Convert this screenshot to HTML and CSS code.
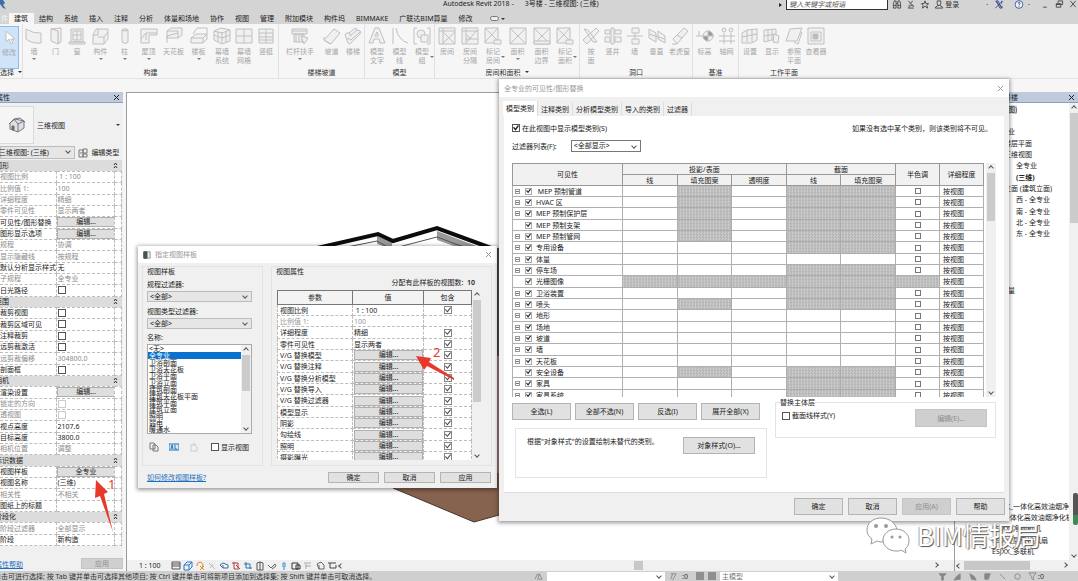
FILE: index.html
```html
<!DOCTYPE html>
<html lang="zh-CN">
<head>
<meta charset="utf-8">
<title>Autodesk Revit 2018 - 三维视图</title>
<link rel="stylesheet" href="styles.css">
</head>
<body>
<header class="titlebar">
  <svg class="logo" viewBox="0 0 6 10"><path d="M0 0h3l2 3-2 2 3 4-3-1-3-4z" fill="#3c6ea8"/></svg>
  <div class="doc-title"><span>Autodesk Revit 2018 -</span><span>3号楼 - 三维视图: (三维)</span></div>
  <div class="title-tools">
    <span class="tri-right"></span>
    <input class="search" type="text" placeholder="键入关键字或短语" aria-label="搜索">
    <svg viewBox="0 0 10 10"><path d="M1 9V4l1-3h2v8zM9 9V4L8 1H6v8zM4 4h2M1 6h3M6 6h3"/></svg>
    <svg viewBox="0 0 10 10"><path d="M2 1l6 6-3-1-3 3h6M7 1L4 4M2 7l2-2"/></svg>
    <svg viewBox="0 0 10 10"><path d="M5 1l1 3h3L7 6l1 3-3-2-3 2 1-3-2-2h3z"/></svg>
    <svg viewBox="0 0 10 10"><path d="M3 1h4v3L6 6h-2L3 4zM4 6L1 8v1h8V8L6 6"/></svg>
    <a class="login" href="#">登录</a>
    <span class="dot">·</span>
    <svg class="navy" viewBox="0 0 10 10"><path d="M1 1l8 8M9 1L1 9M2 1h2l4 8H6zM8 1v3M8 7h1"/></svg>
    <svg class="help" viewBox="0 0 10 10"><circle cx="5" cy="5" r="4.300"/><path d="M4 4q0-2 1.500-1.500T5 6M5 7v1"/></svg>
    <span class="dot">·</span>
    <button class="win" aria-label="最小化"><svg viewBox="0 0 10 10"><path d="M3 8h4"/></svg></button>
    <button class="win" aria-label="还原"><svg viewBox="0 0 10 10"><path d="M4 3V1h5v4H7M2 4h5v4H2zM2 5h5"/></svg></button>
    <button class="win" aria-label="关闭"><svg viewBox="0 0 10 10"><path d="M2 1l6 7M8 1L2 8"/></svg></button>
  </div>
</header>
<nav class="tabs" id="tabs"></nav>
<section class="ribbon" id="ribbon"></section>
<main class="workspace">
  <aside class="props">
    <div class="dock-head"><span class="shift">属性</span><button class="x" aria-label="关闭"><svg viewBox="0 0 7 7"><path d="M1 1l5 5M6 1L1 6"/></svg></button></div>
    <div class="type-row">
      <span class="thumb"><svg viewBox="0 0 18 18"><path d="M2 7l5-4 9 2v7l-6 4-8-3z" fill="#dcdfe6"/><path d="M1 8l5-5 4 5v8M10 8l6-3M6 3l6-1 5 4"/><path d="M4 10h2v4H4z" fill="#555"/></svg></span>
      <span class="type-name">三维视图</span><span class="tri"></span>
    </div>
    <div class="inst-row">
      <span class="select grow"><select aria-label="实例"><option>三维视图: (三维)</option></select></span>
      <button class="edit-type"><svg viewBox="0 0 10 10"><path d="M1 2h4v7H1zM5 1h4v4H5zM5 6h4v3H5zM2 5h2"/></svg>编辑类型</button>
    </div>
    <table class="grid prop-grid" id="props"></table>
    <div class="props-foot"><a href="#">属性帮助</a><button class="btn off">应用</button></div>
  </aside>
  <section class="canvas">
    <div class="scene"><svg viewBox="0 0 829 468">
      <path d="M188 155l62-12 15 7 45-14 52 19v8l-52-18-44 12-16-7-48 11z" fill="#fff"/>
      <path d="M250 142l15 7v7l-15-5zM310 138l50 19h-22l-28-10z" fill="#9a9a9a"/>
      <path d="M186 156l65-15 15 7 44-13 54 20" fill="none" stroke="#0c0c0c" stroke-width="4"/>
      <path d="M200 158l50-10 14 8 46-12 32 12" fill="none" stroke="#555" stroke-width="1"/>
      <path d="M368 155h4v108h-4z" fill="#55594f"/><path d="M368 263h4v124h-4z" fill="#b58b94"/>
      <path d="M230 380l36 15 81 34 25-7v-42z" fill="#86634f"/>
      <path d="M266 395l81 34 25-7" fill="none" stroke="#4a342a"/>
    </svg></div>
    <div class="view-bar">
      <span class="scale">1 : 100</span>
      <span class="view-icons" id="viewIcons"></span>
      <span class="chev left"></span>
      <span class="hthumb"></span>
      <span class="chev right"></span>
      <span class="corner"></span>
    </div>
  </section>
  <aside class="browser">
    <div class="dock-head"><span class="proj">3号楼</span><button class="x" aria-label="关闭"><svg viewBox="0 0 7 7"><path d="M1 1l5 5M6 1L1 6"/></svg></button></div>
    <div class="browser-body">
      <ul class="tree">
        <li class="in3"><mark>图)</mark></li><li></li><li class="in3">业</li><li class="in2">楼层平面</li><li class="in2">三维视图</li>
        <li class="in4">全专业</li><li class="in4"><b>(三维)</b></li><li class="in2">立面 (建筑立面)</li>
        <li class="in4">西 - 全专业</li><li class="in4">南 - 全专业</li><li class="in4">北 - 全专业</li><li class="in4">东 - 全专业</li>
        <li></li><li></li><li></li><li></li><li class="in3">量</li>
      </ul>
      <ul class="tree tree-end">
        <li class="in1">ESJXX_一体化高效油烟净化</li><li class="in1">ES_一体化高效油烟净化机</li><li class="in1">ESJXX_净烟机机</li><li class="in1">ESJXX_厨房排风扇</li><li class="in1">ESJXX_多联机</li>
      </ul>
      <div class="vbar"><span class="chev up"></span><span class="vthumb"></span><span class="mark"></span><span class="chev down end"></span></div>
    </div>
    <div class="browser-h"><span class="chev left"></span><span class="bthumb"></span><span class="chev right"></span></div>
  </aside>
</main>
<footer class="status">
  <span class="hint">单击可进行选择; 按 Tab 键并单击可选择其他项目; 按 Ctrl 键并单击可将新项目添加到选择集; 按 Shift 键并单击可取消选择。</span>
  <svg viewBox="0 0 10 10"><path d="M1 8l3-6 2 2M4 8l2-6 3 6z"/></svg>
  <span class="select workset"><select aria-label="工作集"><option></option></select></span>
  <svg viewBox="0 0 10 10"><path d="M2 2h6L4 9M2 8l2-6"/></svg><span>:0</span>
  <span class="sq"></span><span class="sq"></span>
  <span class="select model"><select aria-label="设计选项"><option>主模型</option></select></span>
  <span class="status-icons"><svg viewBox="0 0 10 10"><path d="M1 2h8L6 5v4H4V5z"/></svg><svg viewBox="0 0 10 10"><path d="M1 9l3-4 4-3v6z"/></svg><svg viewBox="0 0 10 10"><path d="M2 2l5 3 2 4-5-1z"/></svg><svg viewBox="0 0 10 10"><path d="M2 2h6L6 8H2z"/></svg><svg class="line-icon" viewBox="0 0 10 10"><path d="M2 2l3 3M5 5l3 3"/></svg><svg class="line-icon" viewBox="0 0 10 10"><circle cx="5" cy="5" r="3"/></svg><svg class="line-icon" viewBox="0 0 10 10"><path d="M1 1h8L6 5v4L4 7V5z"/></svg><span>:0</span></span>
</footer>

<section class="dialog template" role="dialog" aria-label="指定视图样板">
  <div class="dlg-title"><svg viewBox="0 0 10 10"><path d="M1 1h8v8H1z" fill="#e8e8e8" stroke="#888"/><path d="M1 1h4v8H1z" fill="#3a5f52"/></svg><span>指定视图样板</span><button class="x" aria-label="关闭"><svg viewBox="0 0 7 7"><path d="M1 1l5 5M6 1L1 6"/></svg></button></div>
  <div class="tpl-body">
    <div class="tpl-left">
      <h3>视图样板</h3>
      <label for="f1">规程过滤器:</label>
      <span class="select"><select id="f1"><option>&lt;全部&gt;</option></select></span>
      <label for="f2">视图类型过滤器:</label>
      <span class="select"><select id="f2"><option>&lt;全部&gt;</option></select></span>
      <span class="names">名称:</span>
      <div class="list"><ul>
        <li>&lt;无&gt;</li><li class="sel">全专业</li><li>卫浴剖面</li><li>卫浴天花板</li><li>卫浴平面</li><li>卫浴立面</li><li>建筑剖面</li><li>建筑天花板平面</li><li>建筑平面</li><li>建筑立面</li><li>照明</li><li>弱电</li><li>暖通水</li>
      </ul><div class="vbar"><span class="chev up"></span><span class="vthumb"></span><span class="chev down end"></span></div></div>
      <div class="list-tools">
        <button aria-label="复制"><svg viewBox="0 0 10 10"><path d="M1 1h4l1 1v5H1zM4 3h3l2 2v4H4z"/></svg></button>
        <button aria-label="重命名"><svg class="blue" viewBox="0 0 10 10"><path d="M0 2h10v6H0zM2 7l1-4 1 4M6 3v4h2"/></svg></button>
        <button aria-label="删除"><svg class="faint" viewBox="0 0 10 10"><path d="M2 3h4l2 2v4H2zM4 1l3 2"/></svg></button>
        <label class="check"><input type="checkbox">显示视图</label>
      </div>
    </div>
    <div class="tpl-right">
      <h3>视图属性</h3>
      <p class="count">分配有此样板的视图数:&nbsp; <b>10</b></p>
      <div class="scroller"><div class="clip"><table class="grid tpl-grid"><thead><tr><th>参数</th><th>值</th><th>包含</th></tr></thead><tbody id="tplRows"></tbody></table></div>
      <div class="vbar"><span class="chev up"></span><span class="vthumb"></span><span class="chev down end"></span></div></div>
    </div>
  </div>
  <div class="tpl-foot"><a href="#">如何修改视图样板?</a><button class="btn">确定</button><button class="btn">取消</button><button class="btn">应用</button></div>
</section>

<section class="dialog vg" role="dialog" aria-label="可见性/图形替换">
  <div class="dlg-title"><span>全专业的可见性/图形替换</span><button class="x" aria-label="关闭"><svg viewBox="0 0 7 7"><path d="M1 1l5 5M6 1L1 6"/></svg></button></div>
  <div class="vg-tabs"><button class="on">模型类别</button><button>注释类别</button><button>分析模型类别</button><button>导入的类别</button><button>过滤器</button></div>
  <div class="vg-page">
    <div class="line"><label class="check"><input type="checkbox" checked>在此视图中显示模型类别(S)</label><span class="note">如果没有选中某个类别，则该类别将不可见。</span></div>
    <div class="line filter"><label for="f3">过滤器列表(F):</label><span class="select"><select id="f3"><option>&lt;全部显示&gt;</option></select></span></div>
    <div class="scroller"><div class="clip"><table class="vg-grid">
      <colgroup><col class="c-name"><col><col><col><col><col><col class="c-half"><col class="c-half"></colgroup>
      <thead><tr><th rowspan="2">可见性</th><th colspan="3">投影/表面</th><th colspan="2">截面</th><th rowspan="2">半色调</th><th rowspan="2">详细程度</th></tr>
      <tr><th>线</th><th>填充图案</th><th>透明度</th><th>线</th><th>填充图案</th></tr></thead>
      <tbody id="vgRows"></tbody></table></div>
      <div class="vbar"><span class="chev up"></span><span class="vthumb"></span><span class="chev down end"></span></div></div>
    <div class="vg-lower">
      <div class="vg-a">
        <div class="btn-row"><button class="btn">全选(L)</button><button class="btn">全部不选(N)</button><button class="btn">反选(I)</button><button class="btn">展开全部(X)</button></div>
        <div class="box"><span>根据"对象样式"的设置绘制未替代的类别。</span><button class="btn">对象样式(O)...</button></div>
      </div>
      <fieldset><legend>替换主体层</legend><label class="check"><input type="checkbox">截面线样式(Y)</label><button class="btn off">编辑(E)...</button></fieldset>
    </div>
  </div>
  <div class="vg-foot"><button class="btn">确定</button><button class="btn">取消</button><button class="btn off">应用(A)</button><button class="btn">帮助</button></div>
</section>

<div class="note-mark one"><svg viewBox="0 0 24 56"><path d="M2 1l12 12-4 2 9 38L6 17l-5 2z" fill="#e8382b"/></svg><span>1</span></div>
<div class="note-mark two"><svg viewBox="0 0 40 26"><path d="M1 1l15 2-2 4 25 16v2L12 11l-3 4z" fill="#e8382b"/></svg><span>2</span></div>
<div class="watermark">
  <svg viewBox="0 0 44 37"><path d="M15 1C7 1 1 6 1 13c0 4 2 7 5 9l-1 5 6-3c2 1 4 1 6 1 1-8 7-12 14-12C30 6 23 1 15 1z"/><path d="M30 12c-7 0-13 5-13 11s6 11 13 11c2 0 4 0 5-1l5 3-1-4c3-2 4-5 4-9 0-6-6-11-13-11z"/><g class="eyes"><circle cx="10" cy="9" r="2"/><circle cx="20" cy="9" r="2"/><circle cx="26" cy="20" r="1.500"/><circle cx="34" cy="20" r="1.500"/></g></svg>
  <span>BIM情报局</span>
</div>
<script src="app.js"></script>
</body>
</html>
```
FILE: styles.css
```css
*, *::before, *::after { box-sizing: border-box; }
html, body { height: 100%; }
body {
  margin: 0; overflow: hidden; position: relative;
  display: flex; flex-direction: column;
  font: 7px/9px "Noto Sans", "Noto Sans CJK SC", sans-serif;
  color: #222; background: #f6f6f6; white-space: nowrap;
}
button, input, select { font: inherit; color: inherit; margin: 0; padding: 0; border: 0; background: none; border-radius: 0; }
ul, h3, p { margin: 0; padding: 0; list-style: none; font-weight: 400; font-size: 7px; }
svg { fill: none; stroke: #444; flex: none; display: block; }
a { color: #1c6fc0; }
table { border-collapse: collapse; table-layout: fixed; }
td, th { padding: 0; font-weight: 400; overflow: hidden; }

.titlebar { height: 13px; flex: none; background: #d4d4d4; display: flex; justify-content: space-between; align-items: flex-start; position: relative; }
.logo { width: 6px; height: 10px; stroke: none; }
.doc-title { position: absolute; left: 443px; top: 0; display: flex; gap: 11px; line-height: 8px; }
.title-tools { display: flex; align-items: center; gap: 4px; height: 9px; color: #333; }
.title-tools svg { width: 10px; height: 9px; }
.title-tools .navy { stroke: #34448c; margin-left: 2px; }
.title-tools .help { stroke: #3d5a92; fill: #eef2fa; margin-left: 6px; }
.search { width: 102px; height: 10px; background: #fff; border: 1px solid #333; border-top: 0; padding-left: 2px; font-style: italic; line-height: 7px; }
.search::placeholder { color: #555; }
.tri-right { border: 2px solid transparent; border-left: 3px solid #222; border-right: 0; }
.login { color: #333; text-decoration: none; margin-left: -3px; }
.login + .dot { margin-left: 23px; }
.help + .dot + .win { margin-left: 6px; }

.tabs { height: 11px; flex: none; background: #d4d4d4; display: flex; padding-left: 1px; }
.tabs button { padding: 0 6px 0 5px; line-height: 11px; }
.tabs .file { color: #f4f4f4; padding: 0; width: 7px; }
.tabs .on { background: #f6f6f6; margin-left: 1px; }
.tabs .pill { width: 9px; height: 5px; margin: 3px 2px 0 11px; border: 1px solid #777; border-radius: 3px; background: #eee; }
.tabs .tri { margin-top: 5px; }
.tri { border: 2px solid transparent; border-top: 2px solid #333; border-bottom: 0; display: inline-block; }

.ribbon { height: 55px; flex: none; display: flex; border-bottom: 1px solid #e2e2e2; color: #a6a6a6; }
.panel { border-right: 1px solid #e0e0e0; display: flex; flex-direction: column; justify-content: space-between; padding-bottom: 1px; }
.panel:last-child { border: 0; }
.panel-tools { display: flex; height: 44px; }
.tool { display: flex; flex-direction: column; align-items: center; justify-content: flex-start; padding-top: 3px; color: inherit; text-align: center; position: relative; }
.tool svg { width: 18px; height: 18px; stroke: #c0c0c0; fill: #f0f0f0; margin-bottom: 2px; }
.tool svg .n { fill: none; }
.tool .tri { margin-top: 2px; border-top-color: #777; }
.tool .side { position: absolute; right: 0; top: 30px; }
.panel-name { text-align: center; color: #333; }
.panel-name .tri { margin: 0 0 2px 4px; }
.tool.pick { background: #cfe4f8; border: 1px solid #8fbbe4; border-left: 0; height: 43px; margin-top: 2px; padding-top: 1px; width: 19px; }
.tool.pick svg { fill: #fff; }

.workspace { flex: 1; display: flex; min-height: 0; padding-top: 13px; }
.dock-head { height: 11px; flex: none; background: #bfcbdc; border-bottom: 1px solid #8fa0b8; display: flex; justify-content: space-between; align-items: center; padding-right: 3px; }
.x svg { width: 7px; height: 7px; stroke: #222; }
.shift { margin-left: -4px; }
.props { width: 123px; flex: none; display: flex; flex-direction: column; background: #f0f0f0; overflow: hidden; }
.type-row { display: flex; align-items: center; height: 42px; padding: 2px 3px 0 0; gap: 3px; }
.thumb { width: 34px; height: 38px; border: 1px solid #dadada; border-left: 0; display: grid; place-items: center; background: #f5f5f5; }
.thumb svg { width: 18px; height: 18px; stroke: #777; }
.type-name { flex: 1; }
.inst-row { display: flex; height: 15px; align-items: center; gap: 3px; }
.edit-type { display: flex; align-items: center; gap: 3px; width: 45px; }
.edit-type svg { width: 10px; height: 10px; stroke: #777; }
.select { position: relative; display: flex; border: 1px solid #bcbcbc; background: #e6e6e6; }
.select select { appearance: none; flex: 1; width: 100%; height: 9px; line-height: 9px; padding: 0 10px 0 2px; }
.select::after, .chev::before { content: ""; width: 4px; height: 4px; border: solid #555; border-width: 0 1px 1px 0; transform: rotate(45deg); }
.select::after { position: absolute; right: 4px; top: 2px; }
.grow { width: 76px; }
.grow select { height: 11px; margin-left: -4px; }
.chev { width: 9px; height: 9px; display: grid; place-items: center; flex: none; }
.chev.up { transform: rotate(180deg); }
.chev.left { transform: rotate(90deg); }
.chev.right { transform: rotate(-90deg); }
.end { margin-top: auto; }

.grid { background: #fff; }
.grid td { border: 1px dashed #bdbdbd; height: 11px; line-height: 9px; }
.grid tr:nth-child(3n) td { height: 12px; }
.prop-grid { width: 122px; }
.prop-grid td:first-child { border-left: 0; }
.prop-grid td:nth-child(2) { padding-left: 1px; }
.prop-grid .dim td { color: #8c8c8c; }
.prop-grid .sect td { background: #dcdcdc; border: 0; }
.sect-in { display: flex; justify-content: space-between; align-items: center; padding-right: 4px; margin-left: -5px; }
.sect-in svg { width: 5px; height: 7px; stroke: #333; }
.cell-btn { display: block; width: 100%; height: 10px; line-height: 8px; background: #dedede; border: 1px solid #b0b0b0; }
.prop-grid .cell-btn { width: 59px; margin-left: -1px; }
input[type=checkbox] { appearance: none; width: 8px; height: 8px; border: 1px solid #555; background: #fff; display: block; flex: none; position: relative; }
input[type=checkbox]:checked::after { content: ""; position: absolute; inset: 0; background: #222; clip-path: polygon(0 45%, 18% 30%, 40% 60%, 82% 0, 100% 15%, 42% 95%); }
input:disabled { border-color: #ccc; }
.props-foot { flex: 1; background: #f0f0f0; display: flex; justify-content: space-between; align-items: flex-end; padding-bottom: 2px; }
.props-foot a { margin-left: -5px; }
.props-foot .btn { width: 42px; height: 11px; }
.btn { background: #e1e1e1; border: 1px solid #b4b4b4; text-align: center; }
.btn.off { background: #cfcfcf; border-color: #c4c4c4; color: #8e8e8e; }

.canvas { flex: 1; border: 1px solid #9b9b9b; border-width: 1px 1px 0; margin-left: 3px; background: #fff; display: flex; flex-direction: column; overflow: hidden; }
.scene { flex: 1; min-height: 0; overflow: hidden; }
.scene svg { width: 829px; height: 468px; stroke: none; }
.view-bar { height: 11px; background: #f0f0f0; display: flex; align-items: center; flex: none; }
.scale { width: 44px; padding-left: 12px; }
.view-icons { display: flex; gap: 2px; width: 166px; }
.view-icons svg { width: 10px; height: 10px; }
.hthumb { width: 9px; height: 9px; background: #c8c8c8; margin: 0 auto 0 288px; }
.corner { width: 14px; }
.browser { width: 123px; flex: none; background: #fff; display: flex; flex-direction: column; overflow: hidden; }
.proj { padding-left: 45px; }
.browser-body { flex: 1; min-height: 0; display: grid; grid-template-columns: 1fr 9px; grid-template-rows: 1fr auto; }
.browser-body .vbar { grid-column: 2; grid-row: 1 / 3; }
.tree { overflow: hidden; padding-top: 1px; grid-column: 1; }
.tree li { height: 11px; line-height: 11px; }
.tree li:nth-child(3n) { height: 12px; }
.tree-end { padding: 0 0 3px; }
.tree mark { background: #ddd; color: inherit; }
.in1 { padding-left: 37px; }
.in2 { padding-left: 49px; }
.in3 { padding-left: 53px; }
.in4 { padding-left: 61px; }
.browser-h { height: 11px; background: #f0f0f0; display: flex; align-items: center; padding-right: 9px; }
.bthumb { width: 66px; height: 9px; background: #c8c8c8; }
.browser-h .right { margin-left: auto; }
.vbar { width: 10px; background: #f0f0f0; display: flex; flex-direction: column; align-items: center; flex: none; }
.vthumb { width: 8px; height: 48px; background: #cbcbcb; }
.browser .vthumb { height: 110px; }
.mark { width: 5px; height: 32px; margin: 270px 0 0 3px; border-radius: 2px; background: linear-gradient(#555 70%, #3e8a55 70%); }

.status { height: 10px; flex: none; background: #cfcfcf; display: flex; align-items: center; overflow: hidden; gap: 4px; color: #333; }
.status svg { width: 9px; height: 9px; stroke: #888; }
.hint { width: 534px; flex: none; text-indent: -6px; margin-right: -4px; }
.status .select { background: #fff; border: 0; }
.workset { width: 118px; }
.model { width: 118px; }
.model select { color: #777; }
.sq { width: 8px; height: 8px; background: #8f8f8f; margin-left: 4px; }
.sq + .sq { margin-left: 0; }
.status-icons { display: flex; gap: 6px; margin-left: auto; padding-right: 34px; }
.status-icons svg { fill: #888; }
.status-icons .line-icon { fill: none; }
.status-icons span { margin-left: -5px; }

.dialog { position: absolute; background: #f0f0f0; box-shadow: 0 1px 4px 1px rgba(0, 0, 0, .4); display: flex; flex-direction: column; }
.dlg-title { background: #fff; display: flex; align-items: center; gap: 4px; color: #999; padding: 0 5px; height: 17px; }
.dlg-title svg { width: 8px; height: 8px; }
.dlg-title .x { margin-left: auto; }
.dlg-title .x svg { width: 7px; height: 7px; stroke: #999; }
.check { display: flex; align-items: center; gap: 2px; }
.vbar .chev { height: 10px; }

.template { left: 138px; top: 246px; width: 359px; }
.tpl-body { display: flex; gap: 8px; padding: 3px 5px 0 4px; }
.tpl-left, .tpl-right { border: 1px solid #e2e2e2; height: 200px; }
.tpl-left { width: 121px; padding: 0 10px 0 4px; display: flex; flex-direction: column; }
.tpl-left label[for] { margin: 4px 0 2px; }
.tpl-left label[for=f2] { margin-top: 5px; }
.names { margin: 4px 0 2px; }
.list { height: 90px; border: 1px solid #aaa; background: #fff; display: flex; overflow: hidden; }
.list ul { flex: 1; line-height: 7px; }
.list li { height: 7px; padding-left: 1px; }
.list li:nth-child(4n) { height: 6px; }
.list .sel { background: #0a72cc; color: #fff; }
.list .vthumb { height: 36px; }
.list-tools { display: flex; align-items: center; gap: 10px; padding: 8px 0 0 2px; }
.list-tools svg { width: 10px; height: 10px; stroke: #777; }
.list-tools .blue { stroke: #2474b8; fill: #d6e9f8; }
.list-tools .faint { stroke: #ccc; }
.list-tools .check { margin-left: 2px; }
.tpl-right { flex: 1; padding: 0 9px 0 4px; }
.count { text-align: right; padding: 2px 7px 3px 0; }
.count b { font-weight: 600; }
.scroller { display: flex; }
.tpl-right .clip { flex: 1; height: 170px; overflow: hidden; margin-left: 1px; }
.tpl-grid { width: 100%; }
.tpl-grid th { border: 1px solid #777; background: #f3f3f3; height: 14px; }
.tpl-grid th:first-child { width: 75px; }
.tpl-grid th:last-child { width: 48px; }
.tpl-grid td { padding-left: 2px; }
.tpl-grid td:nth-child(2) { padding-left: 1px; }
.tpl-grid .dim td { color: #999; }
.tpl-grid td:last-child { padding: 0 20px; }
.tpl-grid input[type=checkbox] { border-color: #888; }
.tpl-grid input[type=checkbox]:checked::after { background: #444; clip-path: polygon(0 45%, 12% 35%, 38% 65%, 88% 5%, 100% 15%, 40% 90%); }
.tpl-right .vthumb { height: 102px; }
.tpl-foot { display: flex; align-items: center; gap: 5px; padding: 6px 6px 5px 9px; }
.tpl-foot a { margin-right: auto; }
.tpl-foot .btn { width: 51px; height: 11px; }

.vg { left: 499px; top: 79px; width: 510px; }
.vg .dlg-title { height: 18px; }
.vg-tabs { display: flex; align-items: flex-end; height: 19px; padding: 4px 4px 0; }
.vg-tabs button { height: 14px; padding: 0 3px; border-right: 1px solid #ddd; }
.vg-tabs .on { height: 15px; background: #fff; }
.vg-page { background: #fff; margin: 0 5px; padding: 7px 8px 14px; border: solid #ddd; border-width: 0 0 1px; }
.line { display: flex; align-items: center; justify-content: space-between; height: 10px; }
.note { margin-right: 4px; }
.filter { justify-content: flex-start; gap: 14px; height: 12px; margin: 7px 0 11px; }
.filter .select { width: 70px; height: 12px; background: #fff; border-color: #777; }
.filter .select::after { top: 3px; }
.clip { overflow: hidden; flex: 1; }
.vg .clip { height: 234px; }
.vg-grid { width: 100%; }
.c-name { width: 110px; }
.c-half { width: 44px; }
.vg-grid th { background: #f1f1f1; border: 1px solid #999; height: 11px; line-height: 9px; }
.vg-grid td { border: 1px solid #b0b0b0; height: 11px; line-height: 9px; }
.vg-grid tr:nth-child(3n) td { height: 12px; }
.vg-grid td:last-child { padding-left: 3px; }
.vg-grid td input { margin: 0 auto; width: 6px; height: 6px; border-color: #777; }
.vg-grid .hatch { background: repeating-conic-gradient(#acacac 0 25%, #d8d8d8 0 50%) 0 0 / 3px 3px; border-color: #acacac; }
.cat { display: grid; grid-template-columns: 6px 7px 1fr; gap: 4px; align-items: center; padding-left: 2px; }
.vg-grid .cat input { margin: 0; width: 7px; height: 7px; border-color: #aaa; }
.exp { width: 5px; height: 5px; border: 1px solid #999; background: linear-gradient(#777, #777) center / 3px 1px no-repeat; }
.exp.none { border: 0; background: none; }
.scroller .vbar { margin-left: 2px; }
.tpl-right .scroller .vbar { margin-left: 0; }
.vg-lower { display: flex; justify-content: space-between; padding-top: 6px; }
.btn-row { display: flex; gap: 4px; }
.btn-row .btn { width: 59px; height: 17px; }
.box { margin: 8px 0 0 3px; width: 252px; height: 50px; border: 1px solid #e4e4e4; padding: 8px 11px; display: flex; justify-content: space-between; align-items: flex-start; }
.box .btn { width: 72px; height: 17px; }
fieldset { margin: -5px 0 0; padding: 2px 8px 0 6px; min-width: 0; width: 221px; height: 40px; border: 1px solid #e4e4e4; display: flex; justify-content: space-between; align-items: flex-start; }
legend { padding: 0; margin-left: -2px; }
fieldset .btn { width: 72px; height: 18px; }
fieldset .check { margin-top: 2px; }
.vg-foot { display: flex; justify-content: flex-end; gap: 5px; padding: 5px 4px 6px; }
.vg-foot .btn { width: 49px; height: 17px; }

.note-mark { position: absolute; color: #e8382b; }
.note-mark svg { stroke: none; }
.one { left: 94px; top: 479px; }
.one svg { width: 24px; height: 56px; }
.two { left: 415px; top: 355px; }
.two svg { width: 40px; height: 26px; }
.note-mark span { position: absolute; left: 14px; top: -2px; font-size: 13px; line-height: 14px; }
.two span { left: 18px; top: -10px; }
.watermark { position: absolute; left: 866px; top: 516px; display: flex; align-items: center; gap: 7px; font: 26px/38px "Noto Sans CJK SC", sans-serif; color: #fff; text-shadow: 1px 1px 1px #555, -1px 0 1px #aaa; }
.watermark svg { width: 44px; height: 37px; fill: #fff; stroke: #999; }
.watermark .eyes { fill: #999; stroke: none; }
```
FILE: app.js
```js
const byId = id => document.getElementById(id);

byId('tabs').innerHTML = '<button class="file">件</button>' +
  ['建筑', '结构', '系统', '插入', '注释', '分析', '体量和场地', '协作', '视图', '管理', '附加模块', '构件坞', 'BIMMAKE', '广联达BIM算量', '修改']
    .map((t, i) => `<button class="${i ? '' : 'on'}">${t}</button>`).join('') +
  '<span class="pill"></span><span class="tri"></span>';

const room = '<path d="M1 1h16v16H1z"/><path class="n" d="M5 1v16M5 5l12 12M17 5L5 16M1 4h16"/>';
const roomSplit = '<path d="M1 1h16v16H1z"/><path class="n" d="M5 1v16M1 4h16M6 15L16 3M6 8l4 4M5 12h12"/>';
const area = '<path d="M1 1h16v16H1z"/><path class="n" d="M1 1l16 16M17 1L1 17"/>';
const tag = '<path d="M1 1h13v15H1z"/><path class="n" d="M1 1l13 13M14 1L1 15"/><path d="M10 13h7v4h-7z"/>';
const panels = [
  ['构建', 256, [
    ['墙', 22, 1, '<path d="M1 2q8 5 15 4v10Q7 17 1 12z"/>'],
    ['门', 21, 0, '<path d="M4 2l10-1v14l-3 2V4z"/><path d="M4 2v12l7 3V4z"/>'],
    ['窗', 22, 0, '<path d="M3 2h12v13H3zM1 15h16v2H1z"/><path class="n" d="M5 4h8v9H5zM9 4v9M5 8h8"/>'],
    ['构件', 25, 1, '<path d="M1 8l3-6h12v10l-4 5H1z"/><path class="n" d="M1 8h5V2M6 10h6v7M12 10l4-5"/>'],
    ['柱', 23, 1, '<path d="M6 3q3-3 6 0v12q-3 3-6 0z"/><path class="n" d="M6 3q3 2 6 0"/>'],
    ['屋顶', 25, 1, '<path d="M1 2h16v6h-8v8H1z"/><path class="n" d="M1 12l5-6h11M6 6v7"/>'],
    ['天花板', 25, 0, '<path d="M2 4l4-3h11v7l-4 3H2z"/><path class="n" d="M2 4h11v7M2 16V9l11-3"/>'],
    ['楼板', 25, 1, '<path d="M1 11l5-4h11v5l-4 4H1z"/><path class="n" d="M3 7l4-6h10v6M1 11h12l4-4M13 11v5"/>'],
    ['幕墙<br>系统', 22, 0, '<path d="M1 4l7-3 9 2v11l-8 3-8-4z"/><path class="n" d="M9 5v12M1 4l8 2 8-3M1 8l8 3 8-3M5 5v10M13 4v11"/>'],
    ['幕墙<br>网格', 22, 0, '<path d="M1 2h16v14H1z"/><path class="n" d="M9 2v14M1 9h16"/>'],
    ['竖梃', 22, 0, '<path d="M2 2h14v14H2z"/><path class="n" d="M9 2v14M2 6h14M2 10h14M2 13h14"/>']]],
  ['楼梯坡道', 86, [
    ['栏杆扶手', 42, 1, '<path d="M1 2h15v5H1zM3 7h10v8H3z"/><path class="n" d="M1 4h15M5 7v8M8 7v8M11 7v8"/><path d="M10 9l7 2-4 6z"/>'],
    ['坡道', 21, 0, '<path d="M1 13L11 2l6 4-9 11z"/><path class="n" d="M1 10v3l6 4"/>'],
    ['楼梯', 22, 0, '<path d="M1 8q1-3 4-2l5-4q3-2 3 1l3 1q2 1 0 3L7 16q-2 2-3 0z"/><path class="n" d="M5 6q2 1 1 3l7-6M3 12q3-1 4 1l9-8"/>']]],
  ['模型', 70, [
    ['模型<br>文字', 24, 0, '<path d="M1 16L7 1h4l6 15h-5l-1-4H6l-1 4zM7 9h3L9 5z"/>'],
    ['模型<br>线', 21, 0, '<path class="n" d="M2 1v16M5 1q2 12 12 15"/>'],
    ['模型<br>组', 24, 2, '<path class="n" d="M4 1H1v16h3M14 1h3v16h-3"/><circle cx="8" cy="7" r="4"/><path d="M8 8h7v7H8z"/>']]],
  ['房间和面积', 145, [
    ['房间', 24, 0, room], ['房间<br>分隔', 22, 0, roomSplit],
    ['标记<br>房间', 24, 2, tag], ['面积', 25, 1, area],
    ['面积<br>边界', 23, 0, area + '<path d="M1 14h16v3H1z"/>'], ['标记<br>面积', 24, 2, tag]], 1],
  ['洞口', 113, [
    ['按<br>面', 22, 0, '<path d="M2 2l4 1 9 12-4 0zM14 1l3 3-12 13-4-4z"/>'],
    ['竖井', 21, 0, '<path d="M1 3h5v4H1zM11 3h6v4h-6zM1 10h5v5H1zM11 10h6v5h-6zM7 1h3v16H7z"/>'],
    ['墙', 23, 0, '<path d="M6 1h7v5H6zM6 12h7v5H6z"/><path class="n" d="M1 9h16M9 6v6"/>'],
    ['垂直', 21, 0, '<path d="M1 2l7 4v9l-7-4zM10 4l7 5v7l-7-4z"/><path class="n" d="M1 7l16 5"/>'],
    ['老虎窗', 25, 0, '<path d="M2 12L13 1l4 3L6 17z"/><path class="n" d="M6 8l5 3M1 17h5"/>']]],
  ['基准', 46, [
    ['标高', 23, 0, '<path class="n" d="M0 9h18M3 4v5"/><circle cx="12" cy="9" r="5"/><path d="M12 9V4a5 5 0 0 1 5 5zM12 9v5a5 5 0 0 1-5-5z" fill="#999"/>'],
    ['轴网', 21, 0, '<path class="n" d="M6 6v11M13 6v11M1 9h16M1 14h16"/><circle cx="6" cy="3" r="2"/><circle cx="13" cy="3" r="2"/>']]],
  ['工作平面', 90, [
    ['设置', 22, 0, '<path d="M1 6l5-3 10-1v11l-5 3H1z"/><path class="n" d="M6 3v12M11 3v12M1 10l15-3"/>'],
    ['显示', 22, 0, '<path d="M1 3l12-1v10L1 15z"/><path class="n" d="M5 3v11M9 3v10M1 9l12-2"/><path d="M11 7l5 2-1 7-5-1z"/>'],
    ['参照<br>平面', 22, 0, '<path d="M5 2l12-1-5 13H1z"/><path class="n" d="M17 5l-4 12-4-2"/>'],
    ['查看器', 22, 0, '<path d="M1 1h16v16H1z"/><path d="M4 5h10v9H4z"/><path d="M6 7h5v5H6z" fill="#bbb"/>']]]
];
const tri = '<span class="tri"></span>';
const drops = ['', tri, '<span class="tri side"></span>'];
byId('ribbon').innerHTML =
  `<div class="panel" style="width:23px"><div class="panel-tools"><button class="tool pick"><svg viewBox="0 0 18 18"><path d="M6 3v11l3-3 2 5 2-1-2-4h4z"/></svg>修改</button></div><div class="panel-name">选择${tri}</div></div>` +
  panels.map(([name, w, tools, more]) => `<div class="panel" style="width:${w}px"><div class="panel-tools">` +
    tools.map(([t, tw, drop, d]) => `<button class="tool" style="width:${tw}px"><svg viewBox="0 0 18 18">${d}</svg><span>${t}</span>${drops[drop]}</button>`).join('') +
    `</div><div class="panel-name">${name}${more ? tri : ''}</div></div>`).join('');

// Value markers: '[ ]' tick box, '[x]' disabled tick box, '#text' button. A leading '~' greys the row.
const props = [
  '=图形', '~视图比例| 1 : 100', '~比例值 1:|100', '~详细程度|精细', '~零件可见性|显示两者', '可见性/图形替换|#编辑...', '图形显示选项|#编辑...',
  '~规程|协调', '~显示隐藏线|按规程', '默认分析显示样式|无', '~子规程|全专业', '日光路径|[ ]',
  '=范围', '裁剪视图|[ ]', '裁剪区域可见|[ ]', '注释裁剪|[ ]', '远剪裁激活|[ ]', '~远剪裁偏移|304800.0', '剖面框|[ ]',
  '=相机', '渲染设置|#编辑...', '~锁定的方向|[x]', '~透视图|[x]', '视点高度|2107.6', '目标高度|3800.0', '~相机位置|调整',
  '=标识数据', '视图样板|#全专业', '视图名称|(三维)', '~相关性|不相关', '图纸上的标题|',
  '=阶段化', '~阶段过滤器|全部显示', '阶段|新构造'
];
const value = (v, name) => v[0] === '#' ? `<button class="cell-btn">${v.slice(1)}</button>`
  : v[0] === '[' ? `<input type="checkbox" aria-label="${name}" ${v[1] === 'x' ? 'disabled' : ''}>` : v.replace(/^ /, '&nbsp;');
byId('props').innerHTML = '<colgroup><col style="width:56px"><col><col style="width:7px"></colgroup>' + props.map(r => {
  if (r[0] === '=') return `<tr class="sect"><td colspan="3"><div class="sect-in"><span>${r.slice(1)}</span><svg viewBox="0 0 5 7"><path d="M1 3l1.500-2L4 3M1 6l1.500-2L4 6"/></svg></div></td></tr>`;
  const dim = r[0] === '~', [n, v] = r.replace('~', '').split('|');
  return `<tr class="${dim ? 'dim' : ''}"><td>${n}</td><td>${value(v, n)}</td><td></td></tr>`;
}).join('');

byId('tplRows').innerHTML = ['视图比例| 1 : 100', '~比例值 1:|100', '详细程度|精细', '零件可见性|显示两者', 'V/G 替换模型', 'V/G 替换注释', 'V/G 替换分析模型',
  'V/G 替换导入', 'V/G 替换过滤器', '模型显示', '阴影', '勾绘线', '照明', '摄影曝光'].map(r => {
  const dim = r[0] === '~', [n, v = '#编辑...'] = r.replace('~', '').split('|');
  return `<tr class="${dim ? 'dim' : ''}"><td>${n}</td><td>${value(v, n)}</td><td>${dim ? '' : `<input type="checkbox" checked aria-label="${n}">`}</td></tr>`;
}).join('');

// Each category: name, expandable, shaded flags for the five override columns and the halftone column.
const cats = [
  ['&nbsp;MEP 预制管道', 1, '010110'], ['HVAC 区', 1, '010110'], ['MEP 预制保护层', 1, '010110'], ['MEP 预制支架', 0, '010110'], ['MEP 预制管网', 1, '010110'],
  ['专用设备', 1, '000110'], ['体量', 1, '000000'], ['停车场', 1, '000110'], ['光栅图像', 0, '111111'], ['卫浴装置', 1, '000110'], ['喷头', 1, '010110'],
  ['地形', 1, '000000'], ['场地', 1, '000000'], ['坡道', 1, '000000'], ['墙', 1, '000000'], ['天花板', 1, '000000'], ['安全设备', 0, '010110'],
  ['家具', 1, '000110'], ['家具系统', 1, '000110']
];
byId('vgRows').innerHTML = cats.map(([n, e, h]) => `<tr><td><div class="cat"><span class="exp ${e ? '' : 'none'}"></span><input type="checkbox" checked aria-label="${n}"><span>${n}</span></div></td>` +
  [...h].map((c, i) => `<td class="${c === '1' ? 'hatch' : ''}">${i === 5 && c === '0' ? `<input type="checkbox" aria-label="半色调 ${n}">` : ''}</td>`).join('') +
  '<td>按视图</td></tr>').join('');

byId('viewIcons').innerHTML = [
  ['#555', 'M1 1h8v7H1zM1 3h8M1 5h8'], ['#2878c8', 'M1 4l3-3h5v5L6 9H1zM1 4h5v5M6 4l3-3'], ['#e08a20', 'M2 5a3 3 0 1 1 4 2M5 5l4 4M9 5L5 9'],
  ['#bbb', 'M2 2l6 6M3 7l3-4'], ['#3b6f9a', 'M1 4l3-2 5 2v3H4zM4 4v3'], ['#b04040', 'M1 2h6v5M3 1v7h5M5 4l4 4'], ['#2c70a8', 'M1 3h6v5M3 1v6h6'],
  ['#555', 'M2 2l3-1 3 1v7H2zM5 1v8'], ['#666', 'M1 4l3 3 4-4 1 2-4 3'], ['#3090d0', 'M4 2h2v4H4zM5 7v2'], ['#333', 'M1 2h6v6H1zM5 4h4v4H5z'],
  ['#aaa', 'M1 2h7M2 5h6M3 8V3'], ['#666', 'M2 3l4-2 3 3v4H4zM4 4v4'], ['#444', 'M1 2h8M3 2v5h6V4']
].map(([c, d]) => `<svg viewBox="0 0 10 10"><path d="${d}" stroke="${c}"/></svg>`).join('');
```
